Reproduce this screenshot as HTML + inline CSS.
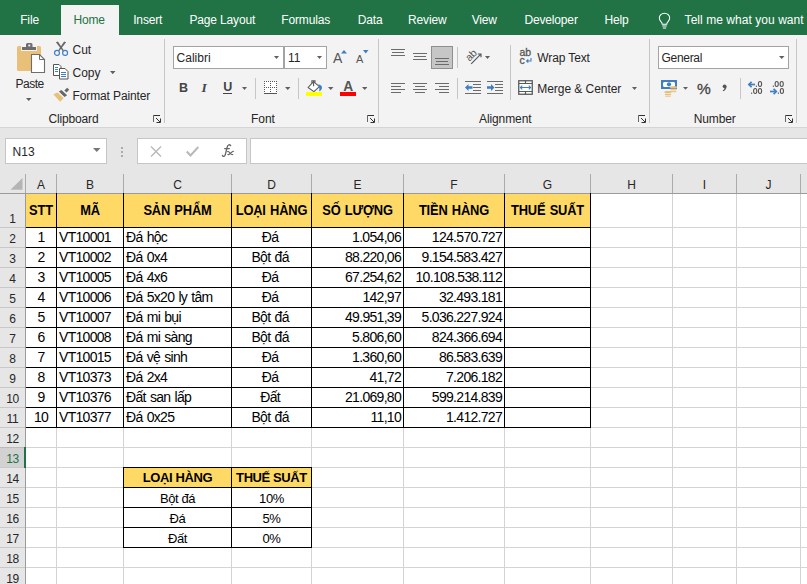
<!DOCTYPE html>
<html><head><meta charset="utf-8"><title>Excel</title><style>
html,body{margin:0;padding:0;width:807px;height:584px;overflow:hidden;background:#fff;font-family:"Liberation Sans",sans-serif;}
.a{position:absolute;}
.t{white-space:nowrap;}
</style></head><body>
<div class="a" style="left:0px;top:0px;width:807px;height:35px;background:#217346"></div>
<div class="a" style="left:61px;top:5px;width:58px;height:30px;background:#f3f3f3"></div>
<div class="a t" style="left:20.2px;top:14.14px;font-size:12px;line-height:12px;color:#ffffff;font-weight:400;letter-spacing:-0.15px;">File</div>
<div class="a t" style="left:73.4px;top:14.14px;font-size:12px;line-height:12px;color:#217346;font-weight:400;letter-spacing:-0.15px;">Home</div>
<div class="a t" style="left:133.2px;top:14.14px;font-size:12px;line-height:12px;color:#ffffff;font-weight:400;letter-spacing:-0.15px;">Insert</div>
<div class="a t" style="left:189.4px;top:14.14px;font-size:12px;line-height:12px;color:#ffffff;font-weight:400;letter-spacing:-0.15px;">Page Layout</div>
<div class="a t" style="left:281.3px;top:14.14px;font-size:12px;line-height:12px;color:#ffffff;font-weight:400;letter-spacing:-0.15px;">Formulas</div>
<div class="a t" style="left:357.7px;top:14.14px;font-size:12px;line-height:12px;color:#ffffff;font-weight:400;letter-spacing:-0.15px;">Data</div>
<div class="a t" style="left:408px;top:14.14px;font-size:12px;line-height:12px;color:#ffffff;font-weight:400;letter-spacing:-0.15px;">Review</div>
<div class="a t" style="left:471.7px;top:14.14px;font-size:12px;line-height:12px;color:#ffffff;font-weight:400;letter-spacing:-0.15px;">View</div>
<div class="a t" style="left:524.4px;top:14.14px;font-size:12px;line-height:12px;color:#ffffff;font-weight:400;letter-spacing:-0.15px;">Developer</div>
<div class="a t" style="left:604.5px;top:14.14px;font-size:12px;line-height:12px;color:#ffffff;font-weight:400;letter-spacing:-0.15px;">Help</div>
<div class="a t" style="left:684.6px;top:14.14px;font-size:12px;line-height:12px;color:#ffffff;font-weight:400;letter-spacing:0.05px;">Tell me what you want to do</div>
<svg class="a" style="left:657.5px;top:12px" width="13" height="17" viewBox="0 0 16 20.5"><path d="M8 1.2 C4.4 1.2 1.6 3.9 1.6 7.2 C1.6 9.5 2.9 10.8 3.9 12 C4.6 12.8 5.2 13.5 5.2 14.8 L10.8 14.8 C10.8 13.5 11.4 12.8 12.1 12 C13.1 10.8 14.4 9.5 14.4 7.2 C14.4 3.9 11.6 1.2 8 1.2 Z" fill="none" stroke="#fff" stroke-width="1.25"/><line x1="5.2" y1="17" x2="10.8" y2="17" stroke="#fff" stroke-width="1.25"/><line x1="6" y1="19.5" x2="10" y2="19.5" stroke="#fff" stroke-width="1.25"/></svg>
<div class="a" style="left:0px;top:35px;width:807px;height:92px;background:#f3f3f3"></div>
<div class="a" style="left:0px;top:127px;width:807px;height:1px;background:#d5d5d5"></div>
<div class="a" style="left:164px;top:39px;width:1px;height:84px;background:#c6c6c6"></div>
<div class="a" style="left:378px;top:39px;width:1px;height:84px;background:#c6c6c6"></div>
<div class="a" style="left:649px;top:39px;width:1px;height:84px;background:#c6c6c6"></div>
<div class="a" style="left:796px;top:39px;width:1px;height:84px;background:#c6c6c6"></div>
<svg class="a" style="left:15px;top:42px" width="32" height="32" viewBox="0 0 32 32"><rect x="2" y="4" width="24" height="25" rx="1.5" fill="#e8c07a"/><path d="M6 9 V4 H10 V2 Q10 0 12 0 H16.5 Q18.5 0 18.5 2 V4 H22 V9 Z" fill="#f3f3f3"/><path d="M7 8 V5 H11 V2.5 Q11 1 12.5 1 H16 Q17.5 1 17.5 2.5 V5 H21 V8 Z" fill="#6d6d6d"/><rect x="13.3" y="2.6" width="2" height="1.8" fill="#f3f3f3"/><path d="M16.5 12.5 H24.5 L29.5 17.5 V30.5 H16.5 Z" fill="#fff" stroke="#6d6d6d" stroke-width="1.1"/><path d="M24.5 12.5 V17.5 H29.5" fill="none" stroke="#6d6d6d" stroke-width="1"/></svg>
<div class="a t" style="left:15.6px;top:77.84px;font-size:12px;line-height:12px;color:#262626;font-weight:400;letter-spacing:-0.5px;">Paste</div>
<svg class="a" style="left:26px;top:98px" width="5.5" height="3" viewBox="0 0 5.5 3"><polygon points="0,0 5.5,0 2.75,3" fill="#5f5f5f"/></svg>
<svg class="a" style="left:53px;top:41px" width="16" height="16" viewBox="0 0 16 16"><path d="M2.9 1.3 L4.9 0.5 L10.9 9.6 L9.9 10.2 Z" fill="#666"/><path d="M13.1 1.3 L11.1 0.5 L5.1 9.6 L6.1 10.2 Z" fill="#666"/><circle cx="4" cy="11.9" r="2.45" fill="none" stroke="#3f7fc1" stroke-width="1.2"/><circle cx="12.1" cy="11.9" r="2.45" fill="none" stroke="#3f7fc1" stroke-width="1.2"/></svg>
<div class="a t" style="left:72.5px;top:43.84px;font-size:12px;line-height:12px;color:#262626;font-weight:400;letter-spacing:0px;">Cut</div>
<svg class="a" style="left:53px;top:64px" width="16" height="16" viewBox="0 0 16 16"><path d="M0.5 0.5 H6 L8 2.5 V11.5 H0.5 Z" fill="#fff" stroke="#555" stroke-width="1"/><path d="M6.5 4.5 H12 L15 7.5 V15 H6.5 Z" fill="#fff" stroke="#555" stroke-width="1"/><path d="M2 3.5 H5 M2 5.5 H5 M2 7.5 H5 M8 8.5 H13 M8 10.5 H13 M8 12.5 H13" stroke="#3f7fc1" stroke-width="1"/></svg>
<div class="a t" style="left:72.5px;top:66.84px;font-size:12px;line-height:12px;color:#262626;font-weight:400;letter-spacing:0px;">Copy</div>
<svg class="a" style="left:110px;top:71px" width="5.5" height="3.200000000000003" viewBox="0 0 5.5 3.200000000000003"><polygon points="0,0 5.5,0 2.75,3.200000000000003" fill="#5f5f5f"/></svg>
<svg class="a" style="left:53px;top:87px" width="17" height="16" viewBox="0 0 17 16"><path d="M0.3 7.3 L4.6 5.6 L10.7 11.2 L7.1 14.8 Z" fill="#e8c07a"/><path d="M5.9 4.6 L8.4 3 L14.1 8.3 L11.5 10 Z" fill="#666"/><path d="M11.4 3.4 L14.1 0.8 L16.2 2.7 L13.5 5.5 Z" fill="#666"/></svg>
<div class="a t" style="left:72.5px;top:89.84px;font-size:12px;line-height:12px;color:#262626;font-weight:400;letter-spacing:-0.12px;">Format Painter</div>
<div class="a t" style="left:48.4px;top:112.84px;font-size:12px;line-height:12px;color:#262626;font-weight:400;letter-spacing:-0.15px;">Clipboard</div>
<svg class="a" style="left:153px;top:115px" width="9" height="9" viewBox="0 0 9 9"><path d="M0.5 7 V0.5" fill="none" stroke="#666" stroke-width="1"/><path d="M0.5 0.5 H7" fill="none" stroke="#333" stroke-width="1"/><path d="M3 3 L7 7" fill="none" stroke="#333" stroke-width="1"/><path d="M3.5 7.5 H7.5 V3.5" fill="none" stroke="#333" stroke-width="1"/></svg>
<div class="a" style="left:173px;top:46px;width:111px;height:23px;background:#fff;border:1px solid #a3a3a3;box-sizing:border-box"></div>
<div class="a" style="left:284px;top:46px;width:43px;height:23px;background:#fff;border:1px solid #a3a3a3;box-sizing:border-box"></div>
<div class="a t" style="left:176.6px;top:51.84px;font-size:12px;line-height:12px;color:#262626;font-weight:400;letter-spacing:0px;">Calibri</div>
<svg class="a" style="left:274px;top:56px" width="5" height="3" viewBox="0 0 5 3"><polygon points="0,0 5,0 2.5,3" fill="#5f5f5f"/></svg>
<div class="a t" style="left:288px;top:51.84px;font-size:12px;line-height:12px;color:#262626;font-weight:400;letter-spacing:0px;">11</div>
<svg class="a" style="left:317px;top:56px" width="5" height="3" viewBox="0 0 5 3"><polygon points="0,0 5,0 2.5,3" fill="#5f5f5f"/></svg>
<div class="a t" style="left:333px;top:51.15px;font-size:14px;line-height:14px;color:#555;font-weight:400;letter-spacing:0px;">A</div>
<svg class="a" style="left:341px;top:50px" width="6" height="3.5" viewBox="0 0 6 3.5"><polygon points="0,3.5 6,3.5 3,0" fill="#3f7fc1"/></svg>
<div class="a t" style="left:356px;top:53.69px;font-size:11px;line-height:11px;color:#555;font-weight:400;letter-spacing:0px;">A</div>
<svg class="a" style="left:363px;top:50px" width="5.5" height="3.5" viewBox="0 0 5.5 3.5"><polygon points="0,0 5.5,0 2.75,3.5" fill="#3f7fc1"/></svg>
<div class="a t" style="left:179px;top:82.02px;font-size:12.5px;line-height:12.5px;color:#444;font-weight:700;letter-spacing:0px;">B</div>
<div class="a t" style="left:201.5px;top:81.17px;font-size:13.5px;line-height:13.5px;color:#444;font-weight:700;letter-spacing:0px;font-style:italic;font-family:'Liberation Serif',serif">I</div>
<div class="a t" style="left:223.3px;top:81.42px;font-size:12.5px;line-height:12.5px;color:#444;font-weight:700;letter-spacing:0px;">U</div>
<div class="a" style="left:223px;top:93px;width:9px;height:1px;background:#444"></div>
<svg class="a" style="left:242px;top:87px" width="5" height="3" viewBox="0 0 5 3"><polygon points="0,0 5,0 2.5,3" fill="#5f5f5f"/></svg>
<div class="a" style="left:255px;top:78px;width:1px;height:21px;background:#c6c6c6"></div>
<div class="a" style="left:264px;top:81px;width:13px;height:13px;background:#fff"></div>
<div class="a" style="left:264px;top:81px;width:1px;height:1px;background:#555"></div>
<div class="a" style="left:264px;top:87px;width:1px;height:1px;background:#555"></div>
<div class="a" style="left:266px;top:81px;width:1px;height:1px;background:#555"></div>
<div class="a" style="left:266px;top:87px;width:1px;height:1px;background:#555"></div>
<div class="a" style="left:268px;top:81px;width:1px;height:1px;background:#555"></div>
<div class="a" style="left:268px;top:87px;width:1px;height:1px;background:#555"></div>
<div class="a" style="left:270px;top:81px;width:1px;height:1px;background:#555"></div>
<div class="a" style="left:270px;top:87px;width:1px;height:1px;background:#555"></div>
<div class="a" style="left:272px;top:81px;width:1px;height:1px;background:#555"></div>
<div class="a" style="left:272px;top:87px;width:1px;height:1px;background:#555"></div>
<div class="a" style="left:274px;top:81px;width:1px;height:1px;background:#555"></div>
<div class="a" style="left:274px;top:87px;width:1px;height:1px;background:#555"></div>
<div class="a" style="left:276px;top:81px;width:1px;height:1px;background:#555"></div>
<div class="a" style="left:276px;top:87px;width:1px;height:1px;background:#555"></div>
<div class="a" style="left:264px;top:83px;width:1px;height:1px;background:#555"></div>
<div class="a" style="left:264px;top:85px;width:1px;height:1px;background:#555"></div>
<div class="a" style="left:264px;top:89px;width:1px;height:1px;background:#555"></div>
<div class="a" style="left:264px;top:91px;width:1px;height:1px;background:#555"></div>
<div class="a" style="left:270px;top:83px;width:1px;height:1px;background:#555"></div>
<div class="a" style="left:270px;top:85px;width:1px;height:1px;background:#555"></div>
<div class="a" style="left:270px;top:89px;width:1px;height:1px;background:#555"></div>
<div class="a" style="left:270px;top:91px;width:1px;height:1px;background:#555"></div>
<div class="a" style="left:276px;top:83px;width:1px;height:1px;background:#555"></div>
<div class="a" style="left:276px;top:85px;width:1px;height:1px;background:#555"></div>
<div class="a" style="left:276px;top:89px;width:1px;height:1px;background:#555"></div>
<div class="a" style="left:276px;top:91px;width:1px;height:1px;background:#555"></div>
<div class="a" style="left:264px;top:93px;width:13px;height:1px;background:#555"></div>
<svg class="a" style="left:285px;top:87px" width="5.5" height="3" viewBox="0 0 5.5 3"><polygon points="0,0 5.5,0 2.75,3" fill="#5f5f5f"/></svg>
<div class="a" style="left:298px;top:78px;width:1px;height:21px;background:#c6c6c6"></div>
<svg class="a" style="left:306px;top:79px" width="17" height="17" viewBox="0 0 17 17"><path d="M2.1 8.5 L7.5 2.6 L13.4 7.6 L7.9 12.6 Z" fill="#fff" stroke="#5a5a5a" stroke-width="1.1" stroke-linejoin="round"/><path d="M5.9 4.3 V1.8 H9 V3.6 M7.6 1.8 V7.2" fill="none" stroke="#5a5a5a" stroke-width="1.1"/><path d="M12.4 5.2 Q16.6 6.3 15.9 9.4 Q15.4 11.4 13.2 12.6 Q13.9 9.2 12.6 7.8 Z" fill="#3f7fc1"/><rect x="0" y="13" width="16" height="4" fill="#ffff00"/></svg>
<svg class="a" style="left:328px;top:87px" width="5.5" height="3" viewBox="0 0 5.5 3"><polygon points="0,0 5.5,0 2.75,3" fill="#5f5f5f"/></svg>
<div class="a" style="left:340px;top:92px;width:16px;height:4px;background:#ff0000"></div>
<div class="a t" style="left:343.2px;top:80.12px;font-size:13.8px;line-height:13.8px;color:#555;font-weight:700;letter-spacing:0px;">A</div>
<svg class="a" style="left:361.5px;top:87px" width="5.5" height="3" viewBox="0 0 5.5 3"><polygon points="0,0 5.5,0 2.75,3" fill="#5f5f5f"/></svg>
<div class="a t" style="left:250.9px;top:112.84px;font-size:12px;line-height:12px;color:#262626;font-weight:400;letter-spacing:0px;">Font</div>
<svg class="a" style="left:367px;top:115px" width="9" height="9" viewBox="0 0 9 9"><path d="M0.5 7 V0.5" fill="none" stroke="#666" stroke-width="1"/><path d="M0.5 0.5 H7" fill="none" stroke="#333" stroke-width="1"/><path d="M3 3 L7 7" fill="none" stroke="#333" stroke-width="1"/><path d="M3.5 7.5 H7.5 V3.5" fill="none" stroke="#333" stroke-width="1"/></svg>
<div class="a" style="left:391px;top:49px;width:14px;height:1px;background:#6b6b6b"></div>
<div class="a" style="left:392px;top:52px;width:12px;height:1px;background:#6b6b6b"></div>
<div class="a" style="left:391px;top:55px;width:14px;height:1px;background:#6b6b6b"></div>
<div class="a" style="left:413px;top:53px;width:14px;height:1px;background:#6b6b6b"></div>
<div class="a" style="left:414px;top:56px;width:12px;height:1px;background:#6b6b6b"></div>
<div class="a" style="left:413px;top:59px;width:14px;height:1px;background:#6b6b6b"></div>
<div class="a" style="left:431px;top:46px;width:22px;height:23px;background:#c6c6c6;border:1px solid #8f8f8f;box-sizing:border-box"></div>
<div class="a" style="left:435px;top:58px;width:14px;height:1px;background:#6b6b6b"></div>
<div class="a" style="left:436px;top:61px;width:12px;height:1px;background:#6b6b6b"></div>
<div class="a" style="left:435px;top:64px;width:14px;height:1px;background:#6b6b6b"></div>
<div class="a" style="left:457px;top:47px;width:1px;height:21px;background:#c6c6c6"></div>
<div class="a t" style="left:468.6px;top:52.5px;font-size:10.5px;line-height:10px;color:#555;transform-origin:0 8.465px;transform:rotate(-45deg)">ab</div>
<svg class="a" style="left:464px;top:49px" width="20" height="16" viewBox="0 0 20 16"><path d="M7.2 14.8 L16.8 5.2 M13.8 5 H17 V8.2" fill="none" stroke="#555" stroke-width="1.15"/></svg>
<svg class="a" style="left:485px;top:56px" width="5" height="3" viewBox="0 0 5 3"><polygon points="0,0 5,0 2.5,3" fill="#5f5f5f"/></svg>
<div class="a" style="left:391px;top:83px;width:14px;height:1px;background:#6b6b6b"></div>
<div class="a" style="left:391px;top:86px;width:10px;height:1px;background:#6b6b6b"></div>
<div class="a" style="left:391px;top:89px;width:14px;height:1px;background:#6b6b6b"></div>
<div class="a" style="left:391px;top:92px;width:10px;height:1px;background:#6b6b6b"></div>
<div class="a" style="left:413px;top:83px;width:14px;height:1px;background:#6b6b6b"></div>
<div class="a" style="left:415px;top:86px;width:10px;height:1px;background:#6b6b6b"></div>
<div class="a" style="left:413px;top:89px;width:14px;height:1px;background:#6b6b6b"></div>
<div class="a" style="left:415px;top:92px;width:10px;height:1px;background:#6b6b6b"></div>
<div class="a" style="left:435px;top:83px;width:14px;height:1px;background:#6b6b6b"></div>
<div class="a" style="left:439px;top:86px;width:10px;height:1px;background:#6b6b6b"></div>
<div class="a" style="left:435px;top:89px;width:14px;height:1px;background:#6b6b6b"></div>
<div class="a" style="left:439px;top:92px;width:10px;height:1px;background:#6b6b6b"></div>
<div class="a" style="left:457px;top:78px;width:1px;height:21px;background:#c6c6c6"></div>
<div class="a" style="left:465px;top:81px;width:16px;height:1px;background:#6b6b6b"></div>
<div class="a" style="left:473px;top:84px;width:8px;height:1px;background:#6b6b6b"></div>
<div class="a" style="left:473px;top:87px;width:8px;height:1px;background:#6b6b6b"></div>
<div class="a" style="left:473px;top:90px;width:8px;height:1px;background:#6b6b6b"></div>
<div class="a" style="left:465px;top:93px;width:16px;height:1px;background:#6b6b6b"></div>
<svg class="a" style="left:465px;top:84px" width="8" height="7" viewBox="0 0 8 7"><path d="M0 3.5 L3.5 0 V2.3 H7.5 V4.7 H3.5 V7 Z" fill="#3f7fc1"/></svg>
<div class="a" style="left:487px;top:81px;width:16px;height:1px;background:#6b6b6b"></div>
<div class="a" style="left:495px;top:84px;width:8px;height:1px;background:#6b6b6b"></div>
<div class="a" style="left:495px;top:87px;width:8px;height:1px;background:#6b6b6b"></div>
<div class="a" style="left:495px;top:90px;width:8px;height:1px;background:#6b6b6b"></div>
<div class="a" style="left:487px;top:93px;width:16px;height:1px;background:#6b6b6b"></div>
<svg class="a" style="left:487px;top:84px" width="8" height="7" viewBox="0 0 8 7"><path d="M7.5 3.5 L4 0 V2.3 H0 V4.7 H4 V7 Z" fill="#3f7fc1"/></svg>
<div class="a" style="left:510px;top:45px;width:1px;height:55px;background:#c6c6c6"></div>
<div class="a t" style="left:519.5px;top:46.91px;font-size:10.5px;line-height:10.5px;color:#555;font-weight:400;letter-spacing:-0.2px;-webkit-text-stroke:0.3px #555">ab</div>
<div class="a t" style="left:519.6px;top:54.51px;font-size:10.5px;line-height:10.5px;color:#555;font-weight:400;letter-spacing:0px;-webkit-text-stroke:0.3px #555">c</div>
<svg class="a" style="left:525px;top:57px" width="8" height="7" viewBox="0 0 8 7"><path d="M6 1 V4 H1.8 M3.3 2.5 L1.6 4 L3.3 5.5" fill="none" stroke="#3f7fc1" stroke-width="1.1"/></svg>
<div class="a t" style="left:537.3px;top:52.14px;font-size:12px;line-height:12px;color:#262626;font-weight:400;letter-spacing:-0.12px;">Wrap Text</div>
<svg class="a" style="left:518px;top:80px" width="15" height="15" viewBox="0 0 15 15"><rect x="0.75" y="0.75" width="13.5" height="13.5" fill="#fff" stroke="#5a5a5a" stroke-width="1.3"/><path d="M0.5 3.5 H14.5 M0.5 11.5 H14.5 M7.5 0.5 V3.5 M7.5 11.5 V14.5" stroke="#5a5a5a" stroke-width="1.2" fill="none"/><path d="M2.4 7.5 H12.6 M4.2 5.7 L2.4 7.5 L4.2 9.3 M10.8 5.7 L12.6 7.5 L10.8 9.3" stroke="#3f7fc1" stroke-width="1.1" fill="none"/></svg>
<div class="a t" style="left:537.3px;top:82.64px;font-size:12px;line-height:12px;color:#262626;font-weight:400;letter-spacing:-0.05px;">Merge &amp; Center</div>
<svg class="a" style="left:632px;top:87px" width="5" height="3" viewBox="0 0 5 3"><polygon points="0,0 5,0 2.5,3" fill="#5f5f5f"/></svg>
<div class="a t" style="left:479px;top:112.84px;font-size:12px;line-height:12px;color:#262626;font-weight:400;letter-spacing:-0.1px;">Alignment</div>
<svg class="a" style="left:638px;top:115px" width="9" height="9" viewBox="0 0 9 9"><path d="M0.5 7 V0.5" fill="none" stroke="#666" stroke-width="1"/><path d="M0.5 0.5 H7" fill="none" stroke="#333" stroke-width="1"/><path d="M3 3 L7 7" fill="none" stroke="#333" stroke-width="1"/><path d="M3.5 7.5 H7.5 V3.5" fill="none" stroke="#333" stroke-width="1"/></svg>
<div class="a" style="left:658px;top:46px;width:131px;height:23px;background:#fff;border:1px solid #a3a3a3;box-sizing:border-box"></div>
<div class="a t" style="left:661.5px;top:51.84px;font-size:12px;line-height:12px;color:#262626;font-weight:400;letter-spacing:-0.3px;">General</div>
<svg class="a" style="left:779px;top:56.3px" width="5.5" height="3.0" viewBox="0 0 5.5 3.0"><polygon points="0,0 5.5,0 2.75,3.0" fill="#5f5f5f"/></svg>
<svg class="a" style="left:660px;top:79px" width="18" height="18" viewBox="0 0 18 18"><rect x="1" y="1" width="16" height="9" fill="#3f7fc1"/><path d="M3.5 3 H14.5 V4 H15 V7 H14.5 V8 H3.5 V7 H3 V4 H3.5 Z" fill="#fff"/><circle cx="9" cy="5.3" r="2.1" fill="#3f7fc1"/><g fill="#e8c07a"><rect x="10" y="7.3" width="7" height="2.2" rx="1.1"/><rect x="10.3" y="10.2" width="6.4" height="1.1"/><rect x="10.8" y="12.1" width="5.4" height="1.1"/><rect x="4.5" y="12" width="7" height="2.2" rx="1.1"/><rect x="4.8" y="14.9" width="6.4" height="1.1"/><rect x="5.3" y="16.6" width="5.4" height="1.1"/></g></svg>
<svg class="a" style="left:683px;top:87px" width="5" height="2.700000000000003" viewBox="0 0 5 2.700000000000003"><polygon points="0,0 5,0 2.5,2.700000000000003" fill="#5f5f5f"/></svg>
<div class="a t" style="left:697px;top:80.58px;font-size:15.5px;line-height:15.5px;color:#444;font-weight:400;letter-spacing:0px;-webkit-text-stroke:0.3px #444">%</div>
<svg class="a" style="left:721px;top:83px" width="7" height="10" viewBox="0 0 7 10"><circle cx="3.6" cy="3.3" r="1.9" fill="#555"/><path d="M5.5 3.4 Q5.5 6.6 2.2 8.3 L1.7 7.6 Q3.7 6.1 3.7 4.4 Z" fill="#555"/></svg>
<div class="a" style="left:740px;top:78px;width:1px;height:21px;background:#c6c6c6"></div>
<svg class="a" style="left:744px;top:78px" width="44" height="18" viewBox="0 0 44 18"><g fill="none" stroke="#3f7fc1" stroke-width="1.7"><path d="M4.8 6.5 H11"/><path d="M7.6 3.8 L4.9 6.5 L7.6 9.2"/><path d="M26 13.5 H32.3"/><path d="M29.6 10.8 L32.3 13.5 L29.6 16.2"/></g><g fill="none" stroke="#555" stroke-width="1.1"><ellipse cx="16" cy="6" rx="1.6" ry="2.45"/><ellipse cx="11.2" cy="13" rx="1.6" ry="2.45"/><ellipse cx="16" cy="13" rx="1.6" ry="2.45"/><ellipse cx="32.7" cy="6" rx="1.6" ry="2.45"/><ellipse cx="37.7" cy="6" rx="1.6" ry="2.45"/><ellipse cx="37.9" cy="13" rx="1.6" ry="2.45"/></g><g fill="#555"><rect x="11.8" y="7.6" width="1.2" height="1.2"/><rect x="7" y="14.6" width="1.2" height="1.2"/><rect x="28.8" y="7.6" width="1.2" height="1.2"/><rect x="33.8" y="14.6" width="1.2" height="1.2"/></g></svg>
<div class="a t" style="left:693.7px;top:112.84px;font-size:12px;line-height:12px;color:#262626;font-weight:400;letter-spacing:-0.1px;">Number</div>
<svg class="a" style="left:785px;top:115px" width="9" height="9" viewBox="0 0 9 9"><path d="M0.5 7 V0.5" fill="none" stroke="#666" stroke-width="1"/><path d="M0.5 0.5 H7" fill="none" stroke="#333" stroke-width="1"/><path d="M3 3 L7 7" fill="none" stroke="#333" stroke-width="1"/><path d="M3.5 7.5 H7.5 V3.5" fill="none" stroke="#333" stroke-width="1"/></svg>
<div class="a" style="left:0px;top:128px;width:807px;height:46px;background:#e6e6e6"></div>
<div class="a" style="left:5px;top:138px;width:102px;height:26px;background:#fff;border:1px solid #c6c6c6;box-sizing:border-box"></div>
<div class="a t" style="left:12.6px;top:145.84px;font-size:12px;line-height:12px;color:#262626;font-weight:400;letter-spacing:0px;">N13</div>
<svg class="a" style="left:93px;top:148px" width="7.5" height="4" viewBox="0 0 7.5 4"><polygon points="0,0 7.5,0 3.75,4" fill="#777"/></svg>
<div class="a" style="left:121px;top:147px;width:2px;height:2px;background:#aaa"></div>
<div class="a" style="left:121px;top:151px;width:2px;height:2px;background:#aaa"></div>
<div class="a" style="left:121px;top:155px;width:2px;height:2px;background:#aaa"></div>
<div class="a" style="left:137px;top:138px;width:110px;height:26px;background:#fff;border:1px solid #c6c6c6;box-sizing:border-box"></div>
<svg class="a" style="left:150px;top:146px" width="12" height="11" viewBox="0 0 12 11"><path d="M1 0.5 L11 10.5 M11 0.5 L1 10.5" stroke="#b8b8b8" stroke-width="1.4"/></svg>
<svg class="a" style="left:186px;top:146px" width="13" height="11" viewBox="0 0 13 11"><path d="M0.8 5.5 L4.5 9.5 L12.3 1" fill="none" stroke="#b8b8b8" stroke-width="2"/></svg>
<svg class="a" style="left:220px;top:143px" width="16" height="16" viewBox="0 0 16 16"><g fill="none" stroke="#666" stroke-linecap="round"><path d="M10.6 2.6 Q10 1.6 8.9 1.8 Q7.6 2.1 7.1 4.3 L5.3 11.6 Q4.8 13.6 3.3 13.3 Q2.5 13.1 2.4 12.4" stroke-width="1.35"/><path d="M4.6 5.6 H9.4" stroke-width="1.1"/><path d="M7.6 8.6 Q8.6 8.2 9.2 9.2 L10.9 11 Q11.5 11.8 12.8 11.5 M13.6 8.3 Q12.6 8.3 12 9 L9.6 11 Q8.8 11.8 7.8 11.5" stroke-width="1.1"/></g></svg>
<div class="a" style="left:250px;top:138px;width:557px;height:26px;background:#fff;border:1px solid #c6c6c6;border-right:none;box-sizing:border-box"></div>
<div class="a" style="left:0px;top:174px;width:807px;height:19px;background:#e6e6e6"></div>
<div class="a" style="left:0px;top:193px;width:807px;height:1px;background:#9b9b9b"></div>
<div class="a t" style="left:26px;width:30px;text-align:center;top:178.64px;font-size:12px;line-height:12px;color:#262626;font-weight:400;letter-spacing:0px;">A</div>
<div class="a t" style="left:57px;width:66px;text-align:center;top:178.64px;font-size:12px;line-height:12px;color:#262626;font-weight:400;letter-spacing:0px;">B</div>
<div class="a t" style="left:124px;width:107px;text-align:center;top:178.64px;font-size:12px;line-height:12px;color:#262626;font-weight:400;letter-spacing:0px;">C</div>
<div class="a t" style="left:232px;width:79px;text-align:center;top:178.64px;font-size:12px;line-height:12px;color:#262626;font-weight:400;letter-spacing:0px;">D</div>
<div class="a t" style="left:312px;width:91px;text-align:center;top:178.64px;font-size:12px;line-height:12px;color:#262626;font-weight:400;letter-spacing:0px;">E</div>
<div class="a t" style="left:404px;width:100px;text-align:center;top:178.64px;font-size:12px;line-height:12px;color:#262626;font-weight:400;letter-spacing:0px;">F</div>
<div class="a t" style="left:505px;width:85px;text-align:center;top:178.64px;font-size:12px;line-height:12px;color:#262626;font-weight:400;letter-spacing:0px;">G</div>
<div class="a t" style="left:591px;width:81px;text-align:center;top:178.64px;font-size:12px;line-height:12px;color:#262626;font-weight:400;letter-spacing:0px;">H</div>
<div class="a t" style="left:673px;width:63px;text-align:center;top:178.64px;font-size:12px;line-height:12px;color:#262626;font-weight:400;letter-spacing:0px;">I</div>
<div class="a t" style="left:737px;width:63px;text-align:center;top:178.64px;font-size:12px;line-height:12px;color:#262626;font-weight:400;letter-spacing:0px;">J</div>
<div class="a" style="left:25px;top:174px;width:1px;height:19px;background:#ababab"></div>
<div class="a" style="left:56px;top:174px;width:1px;height:19px;background:#ababab"></div>
<div class="a" style="left:123px;top:174px;width:1px;height:19px;background:#ababab"></div>
<div class="a" style="left:231px;top:174px;width:1px;height:19px;background:#ababab"></div>
<div class="a" style="left:311px;top:174px;width:1px;height:19px;background:#ababab"></div>
<div class="a" style="left:403px;top:174px;width:1px;height:19px;background:#ababab"></div>
<div class="a" style="left:504px;top:174px;width:1px;height:19px;background:#ababab"></div>
<div class="a" style="left:590px;top:174px;width:1px;height:19px;background:#ababab"></div>
<div class="a" style="left:672px;top:174px;width:1px;height:19px;background:#ababab"></div>
<div class="a" style="left:736px;top:174px;width:1px;height:19px;background:#ababab"></div>
<div class="a" style="left:800px;top:174px;width:1px;height:19px;background:#ababab"></div>
<div class="a" style="left:0px;top:194px;width:25px;height:390px;background:#e6e6e6"></div>
<div class="a" style="left:25px;top:194px;width:1px;height:390px;background:#9b9b9b"></div>
<svg class="a" style="left:10px;top:178px" width="13" height="12" viewBox="0 0 13 12"><polygon points="12.5,0 12.5,11.7 0.5,11.7" fill="#b4b4b4"/></svg>
<div class="a" style="left:56px;top:194px;width:1px;height:390px;background:#d4d4d4"></div>
<div class="a" style="left:123px;top:194px;width:1px;height:390px;background:#d4d4d4"></div>
<div class="a" style="left:231px;top:194px;width:1px;height:390px;background:#d4d4d4"></div>
<div class="a" style="left:311px;top:194px;width:1px;height:390px;background:#d4d4d4"></div>
<div class="a" style="left:403px;top:194px;width:1px;height:390px;background:#d4d4d4"></div>
<div class="a" style="left:504px;top:194px;width:1px;height:390px;background:#d4d4d4"></div>
<div class="a" style="left:590px;top:194px;width:1px;height:390px;background:#d4d4d4"></div>
<div class="a" style="left:672px;top:194px;width:1px;height:390px;background:#d4d4d4"></div>
<div class="a" style="left:736px;top:194px;width:1px;height:390px;background:#d4d4d4"></div>
<div class="a" style="left:800px;top:194px;width:1px;height:390px;background:#d4d4d4"></div>
<div class="a" style="left:26px;top:227px;width:781px;height:1px;background:#d4d4d4"></div>
<div class="a" style="left:0px;top:227px;width:25px;height:1px;background:#c8c8c8"></div>
<div class="a" style="left:26px;top:247px;width:781px;height:1px;background:#d4d4d4"></div>
<div class="a" style="left:0px;top:247px;width:25px;height:1px;background:#c8c8c8"></div>
<div class="a" style="left:26px;top:267px;width:781px;height:1px;background:#d4d4d4"></div>
<div class="a" style="left:0px;top:267px;width:25px;height:1px;background:#c8c8c8"></div>
<div class="a" style="left:26px;top:287px;width:781px;height:1px;background:#d4d4d4"></div>
<div class="a" style="left:0px;top:287px;width:25px;height:1px;background:#c8c8c8"></div>
<div class="a" style="left:26px;top:307px;width:781px;height:1px;background:#d4d4d4"></div>
<div class="a" style="left:0px;top:307px;width:25px;height:1px;background:#c8c8c8"></div>
<div class="a" style="left:26px;top:327px;width:781px;height:1px;background:#d4d4d4"></div>
<div class="a" style="left:0px;top:327px;width:25px;height:1px;background:#c8c8c8"></div>
<div class="a" style="left:26px;top:347px;width:781px;height:1px;background:#d4d4d4"></div>
<div class="a" style="left:0px;top:347px;width:25px;height:1px;background:#c8c8c8"></div>
<div class="a" style="left:26px;top:367px;width:781px;height:1px;background:#d4d4d4"></div>
<div class="a" style="left:0px;top:367px;width:25px;height:1px;background:#c8c8c8"></div>
<div class="a" style="left:26px;top:387px;width:781px;height:1px;background:#d4d4d4"></div>
<div class="a" style="left:0px;top:387px;width:25px;height:1px;background:#c8c8c8"></div>
<div class="a" style="left:26px;top:407px;width:781px;height:1px;background:#d4d4d4"></div>
<div class="a" style="left:0px;top:407px;width:25px;height:1px;background:#c8c8c8"></div>
<div class="a" style="left:26px;top:427px;width:781px;height:1px;background:#d4d4d4"></div>
<div class="a" style="left:0px;top:427px;width:25px;height:1px;background:#c8c8c8"></div>
<div class="a" style="left:26px;top:447px;width:781px;height:1px;background:#d4d4d4"></div>
<div class="a" style="left:0px;top:447px;width:25px;height:1px;background:#c8c8c8"></div>
<div class="a" style="left:26px;top:467px;width:781px;height:1px;background:#d4d4d4"></div>
<div class="a" style="left:0px;top:467px;width:25px;height:1px;background:#c8c8c8"></div>
<div class="a" style="left:26px;top:487px;width:781px;height:1px;background:#d4d4d4"></div>
<div class="a" style="left:0px;top:487px;width:25px;height:1px;background:#c8c8c8"></div>
<div class="a" style="left:26px;top:507px;width:781px;height:1px;background:#d4d4d4"></div>
<div class="a" style="left:0px;top:507px;width:25px;height:1px;background:#c8c8c8"></div>
<div class="a" style="left:26px;top:527px;width:781px;height:1px;background:#d4d4d4"></div>
<div class="a" style="left:0px;top:527px;width:25px;height:1px;background:#c8c8c8"></div>
<div class="a" style="left:26px;top:547px;width:781px;height:1px;background:#d4d4d4"></div>
<div class="a" style="left:0px;top:547px;width:25px;height:1px;background:#c8c8c8"></div>
<div class="a" style="left:26px;top:567px;width:781px;height:1px;background:#d4d4d4"></div>
<div class="a" style="left:0px;top:567px;width:25px;height:1px;background:#c8c8c8"></div>
<div class="a" style="left:26px;top:587px;width:781px;height:1px;background:#d4d4d4"></div>
<div class="a" style="left:0px;top:587px;width:25px;height:1px;background:#c8c8c8"></div>
<div class="a" style="left:0px;top:448px;width:24px;height:19px;background:#d2d2d2"></div>
<div class="a" style="left:0px;top:447px;width:24px;height:1px;background:#bababa"></div>
<div class="a" style="left:24px;top:447px;width:2px;height:21px;background:#217346"></div>
<div class="a t" style="left:0px;width:25px;text-align:center;top:213.24px;font-size:12px;line-height:12px;color:#262626;font-weight:400;letter-spacing:-0.3px;">1</div>
<div class="a t" style="left:0px;width:25px;text-align:center;top:233.24px;font-size:12px;line-height:12px;color:#262626;font-weight:400;letter-spacing:-0.3px;">2</div>
<div class="a t" style="left:0px;width:25px;text-align:center;top:253.24px;font-size:12px;line-height:12px;color:#262626;font-weight:400;letter-spacing:-0.3px;">3</div>
<div class="a t" style="left:0px;width:25px;text-align:center;top:273.24px;font-size:12px;line-height:12px;color:#262626;font-weight:400;letter-spacing:-0.3px;">4</div>
<div class="a t" style="left:0px;width:25px;text-align:center;top:293.24px;font-size:12px;line-height:12px;color:#262626;font-weight:400;letter-spacing:-0.3px;">5</div>
<div class="a t" style="left:0px;width:25px;text-align:center;top:313.24px;font-size:12px;line-height:12px;color:#262626;font-weight:400;letter-spacing:-0.3px;">6</div>
<div class="a t" style="left:0px;width:25px;text-align:center;top:333.24px;font-size:12px;line-height:12px;color:#262626;font-weight:400;letter-spacing:-0.3px;">7</div>
<div class="a t" style="left:0px;width:25px;text-align:center;top:353.24px;font-size:12px;line-height:12px;color:#262626;font-weight:400;letter-spacing:-0.3px;">8</div>
<div class="a t" style="left:0px;width:25px;text-align:center;top:373.24px;font-size:12px;line-height:12px;color:#262626;font-weight:400;letter-spacing:-0.3px;">9</div>
<div class="a t" style="left:0px;width:25px;text-align:center;top:393.24px;font-size:12px;line-height:12px;color:#262626;font-weight:400;letter-spacing:-0.3px;">10</div>
<div class="a t" style="left:0px;width:25px;text-align:center;top:413.24px;font-size:12px;line-height:12px;color:#262626;font-weight:400;letter-spacing:-0.3px;">11</div>
<div class="a t" style="left:0px;width:25px;text-align:center;top:433.24px;font-size:12px;line-height:12px;color:#262626;font-weight:400;letter-spacing:-0.3px;">12</div>
<div class="a t" style="left:0px;width:25px;text-align:center;top:453.24px;font-size:12px;line-height:12px;color:#217346;font-weight:400;letter-spacing:-0.3px;">13</div>
<div class="a t" style="left:0px;width:25px;text-align:center;top:473.24px;font-size:12px;line-height:12px;color:#262626;font-weight:400;letter-spacing:-0.3px;">14</div>
<div class="a t" style="left:0px;width:25px;text-align:center;top:493.24px;font-size:12px;line-height:12px;color:#262626;font-weight:400;letter-spacing:-0.3px;">15</div>
<div class="a t" style="left:0px;width:25px;text-align:center;top:513.24px;font-size:12px;line-height:12px;color:#262626;font-weight:400;letter-spacing:-0.3px;">16</div>
<div class="a t" style="left:0px;width:25px;text-align:center;top:533.24px;font-size:12px;line-height:12px;color:#262626;font-weight:400;letter-spacing:-0.3px;">17</div>
<div class="a t" style="left:0px;width:25px;text-align:center;top:553.24px;font-size:12px;line-height:12px;color:#262626;font-weight:400;letter-spacing:-0.3px;">18</div>
<div class="a t" style="left:0px;width:25px;text-align:center;top:573.24px;font-size:12px;line-height:12px;color:#262626;font-weight:400;letter-spacing:-0.3px;">19</div>
<div class="a" style="left:26px;top:194px;width:564px;height:33px;background:#ffd966"></div>
<div class="a" style="left:124px;top:468px;width:187px;height:19px;background:#ffd966"></div>
<div class="a" style="left:56px;top:193px;width:1px;height:235px;background:#000"></div>
<div class="a" style="left:123px;top:193px;width:1px;height:235px;background:#000"></div>
<div class="a" style="left:231px;top:193px;width:1px;height:235px;background:#000"></div>
<div class="a" style="left:311px;top:193px;width:1px;height:235px;background:#000"></div>
<div class="a" style="left:403px;top:193px;width:1px;height:235px;background:#000"></div>
<div class="a" style="left:504px;top:193px;width:1px;height:235px;background:#000"></div>
<div class="a" style="left:590px;top:193px;width:1px;height:235px;background:#000"></div>
<div class="a" style="left:26px;top:227px;width:564px;height:1px;background:#000"></div>
<div class="a" style="left:26px;top:247px;width:564px;height:1px;background:#000"></div>
<div class="a" style="left:26px;top:267px;width:564px;height:1px;background:#000"></div>
<div class="a" style="left:26px;top:287px;width:564px;height:1px;background:#000"></div>
<div class="a" style="left:26px;top:307px;width:564px;height:1px;background:#000"></div>
<div class="a" style="left:26px;top:327px;width:564px;height:1px;background:#000"></div>
<div class="a" style="left:26px;top:347px;width:564px;height:1px;background:#000"></div>
<div class="a" style="left:26px;top:367px;width:564px;height:1px;background:#000"></div>
<div class="a" style="left:26px;top:387px;width:564px;height:1px;background:#000"></div>
<div class="a" style="left:26px;top:407px;width:564px;height:1px;background:#000"></div>
<div class="a" style="left:26px;top:427px;width:564px;height:1px;background:#000"></div>
<div class="a" style="left:123px;top:467px;width:1px;height:81px;background:#000"></div>
<div class="a" style="left:231px;top:467px;width:1px;height:81px;background:#000"></div>
<div class="a" style="left:311px;top:467px;width:1px;height:81px;background:#000"></div>
<div class="a" style="left:123px;top:467px;width:189px;height:1px;background:#000"></div>
<div class="a" style="left:123px;top:487px;width:189px;height:1px;background:#000"></div>
<div class="a" style="left:123px;top:507px;width:189px;height:1px;background:#000"></div>
<div class="a" style="left:123px;top:527px;width:189px;height:1px;background:#000"></div>
<div class="a" style="left:123px;top:547px;width:189px;height:1px;background:#000"></div>
<div class="a t" style="left:26px;width:30px;text-align:center;top:203.15px;font-size:14px;line-height:14px;color:#000;font-weight:700;letter-spacing:-0.2px;transform:scaleX(0.92);word-spacing:1px">STT</div>
<div class="a t" style="left:57px;width:66px;text-align:center;top:203.15px;font-size:14px;line-height:14px;color:#000;font-weight:700;letter-spacing:-0.2px;transform:scaleX(0.92);word-spacing:1px">MÃ</div>
<div class="a t" style="left:124px;width:107px;text-align:center;top:203.15px;font-size:14px;line-height:14px;color:#000;font-weight:700;letter-spacing:-0.2px;transform:scaleX(0.92);word-spacing:1px">SẢN PHẨM</div>
<div class="a t" style="left:232px;width:79px;text-align:center;top:203.15px;font-size:14px;line-height:14px;color:#000;font-weight:700;letter-spacing:-0.2px;transform:scaleX(0.92);word-spacing:1px">LOẠI HÀNG</div>
<div class="a t" style="left:312px;width:91px;text-align:center;top:203.15px;font-size:14px;line-height:14px;color:#000;font-weight:700;letter-spacing:-0.2px;transform:scaleX(0.92);word-spacing:1px">SỐ LƯỢNG</div>
<div class="a t" style="left:404px;width:100px;text-align:center;top:203.15px;font-size:14px;line-height:14px;color:#000;font-weight:700;letter-spacing:-0.2px;transform:scaleX(0.92);word-spacing:1px">TIỀN HÀNG</div>
<div class="a t" style="left:505px;width:85px;text-align:center;top:203.15px;font-size:14px;line-height:14px;color:#000;font-weight:700;letter-spacing:-0.2px;transform:scaleX(0.92);word-spacing:1px">THUẾ SUẤT</div>
<div class="a t" style="left:26px;width:30px;text-align:center;top:230.15px;font-size:14px;line-height:14px;color:#000;font-weight:400;letter-spacing:-0.7px;word-spacing:1px">1</div>
<div class="a t" style="left:59px;top:230.15px;font-size:14px;line-height:14px;color:#000;font-weight:400;letter-spacing:-0.7px;word-spacing:1px">VT10001</div>
<div class="a t" style="left:126px;top:230.15px;font-size:14px;line-height:14px;color:#000;font-weight:400;letter-spacing:-0.7px;word-spacing:1px">Đá hộc</div>
<div class="a t" style="left:230.6px;width:79.00000000000003px;text-align:center;top:230.15px;font-size:14px;line-height:14px;color:#000;font-weight:400;letter-spacing:-0.7px;word-spacing:1px">Đá</div>
<div class="a t" style="right:406px;top:230.15px;font-size:14px;line-height:14px;color:#000;font-weight:400;letter-spacing:-0.7px;word-spacing:1px">1.054,06</div>
<div class="a t" style="right:305px;top:230.15px;font-size:14px;line-height:14px;color:#000;font-weight:400;letter-spacing:-0.7px;word-spacing:1px">124.570.727</div>
<div class="a t" style="left:26px;width:30px;text-align:center;top:250.15px;font-size:14px;line-height:14px;color:#000;font-weight:400;letter-spacing:-0.7px;word-spacing:1px">2</div>
<div class="a t" style="left:59px;top:250.15px;font-size:14px;line-height:14px;color:#000;font-weight:400;letter-spacing:-0.7px;word-spacing:1px">VT10002</div>
<div class="a t" style="left:126px;top:250.15px;font-size:14px;line-height:14px;color:#000;font-weight:400;letter-spacing:-0.7px;word-spacing:1px">Đá 0x4</div>
<div class="a t" style="left:230.6px;width:79.00000000000003px;text-align:center;top:250.15px;font-size:14px;line-height:14px;color:#000;font-weight:400;letter-spacing:-0.7px;word-spacing:1px">Bột đá</div>
<div class="a t" style="right:406px;top:250.15px;font-size:14px;line-height:14px;color:#000;font-weight:400;letter-spacing:-0.7px;word-spacing:1px">88.220,06</div>
<div class="a t" style="right:305px;top:250.15px;font-size:14px;line-height:14px;color:#000;font-weight:400;letter-spacing:-0.7px;word-spacing:1px">9.154.583.427</div>
<div class="a t" style="left:26px;width:30px;text-align:center;top:270.15px;font-size:14px;line-height:14px;color:#000;font-weight:400;letter-spacing:-0.7px;word-spacing:1px">3</div>
<div class="a t" style="left:59px;top:270.15px;font-size:14px;line-height:14px;color:#000;font-weight:400;letter-spacing:-0.7px;word-spacing:1px">VT10005</div>
<div class="a t" style="left:126px;top:270.15px;font-size:14px;line-height:14px;color:#000;font-weight:400;letter-spacing:-0.7px;word-spacing:1px">Đá 4x6</div>
<div class="a t" style="left:230.6px;width:79.00000000000003px;text-align:center;top:270.15px;font-size:14px;line-height:14px;color:#000;font-weight:400;letter-spacing:-0.7px;word-spacing:1px">Đá</div>
<div class="a t" style="right:406px;top:270.15px;font-size:14px;line-height:14px;color:#000;font-weight:400;letter-spacing:-0.7px;word-spacing:1px">67.254,62</div>
<div class="a t" style="right:305px;top:270.15px;font-size:14px;line-height:14px;color:#000;font-weight:400;letter-spacing:-0.7px;word-spacing:1px">10.108.538.112</div>
<div class="a t" style="left:26px;width:30px;text-align:center;top:290.15px;font-size:14px;line-height:14px;color:#000;font-weight:400;letter-spacing:-0.7px;word-spacing:1px">4</div>
<div class="a t" style="left:59px;top:290.15px;font-size:14px;line-height:14px;color:#000;font-weight:400;letter-spacing:-0.7px;word-spacing:1px">VT10006</div>
<div class="a t" style="left:126px;top:290.15px;font-size:14px;line-height:14px;color:#000;font-weight:400;letter-spacing:-0.7px;word-spacing:1px">Đá 5x20 ly tâm</div>
<div class="a t" style="left:230.6px;width:79.00000000000003px;text-align:center;top:290.15px;font-size:14px;line-height:14px;color:#000;font-weight:400;letter-spacing:-0.7px;word-spacing:1px">Đá</div>
<div class="a t" style="right:406px;top:290.15px;font-size:14px;line-height:14px;color:#000;font-weight:400;letter-spacing:-0.7px;word-spacing:1px">142,97</div>
<div class="a t" style="right:305px;top:290.15px;font-size:14px;line-height:14px;color:#000;font-weight:400;letter-spacing:-0.7px;word-spacing:1px">32.493.181</div>
<div class="a t" style="left:26px;width:30px;text-align:center;top:310.15px;font-size:14px;line-height:14px;color:#000;font-weight:400;letter-spacing:-0.7px;word-spacing:1px">5</div>
<div class="a t" style="left:59px;top:310.15px;font-size:14px;line-height:14px;color:#000;font-weight:400;letter-spacing:-0.7px;word-spacing:1px">VT10007</div>
<div class="a t" style="left:126px;top:310.15px;font-size:14px;line-height:14px;color:#000;font-weight:400;letter-spacing:-0.7px;word-spacing:1px">Đá mi bụi</div>
<div class="a t" style="left:230.6px;width:79.00000000000003px;text-align:center;top:310.15px;font-size:14px;line-height:14px;color:#000;font-weight:400;letter-spacing:-0.7px;word-spacing:1px">Bột đá</div>
<div class="a t" style="right:406px;top:310.15px;font-size:14px;line-height:14px;color:#000;font-weight:400;letter-spacing:-0.7px;word-spacing:1px">49.951,39</div>
<div class="a t" style="right:305px;top:310.15px;font-size:14px;line-height:14px;color:#000;font-weight:400;letter-spacing:-0.7px;word-spacing:1px">5.036.227.924</div>
<div class="a t" style="left:26px;width:30px;text-align:center;top:330.15px;font-size:14px;line-height:14px;color:#000;font-weight:400;letter-spacing:-0.7px;word-spacing:1px">6</div>
<div class="a t" style="left:59px;top:330.15px;font-size:14px;line-height:14px;color:#000;font-weight:400;letter-spacing:-0.7px;word-spacing:1px">VT10008</div>
<div class="a t" style="left:126px;top:330.15px;font-size:14px;line-height:14px;color:#000;font-weight:400;letter-spacing:-0.7px;word-spacing:1px">Đá mi sàng</div>
<div class="a t" style="left:230.6px;width:79.00000000000003px;text-align:center;top:330.15px;font-size:14px;line-height:14px;color:#000;font-weight:400;letter-spacing:-0.7px;word-spacing:1px">Bột đá</div>
<div class="a t" style="right:406px;top:330.15px;font-size:14px;line-height:14px;color:#000;font-weight:400;letter-spacing:-0.7px;word-spacing:1px">5.806,60</div>
<div class="a t" style="right:305px;top:330.15px;font-size:14px;line-height:14px;color:#000;font-weight:400;letter-spacing:-0.7px;word-spacing:1px">824.366.694</div>
<div class="a t" style="left:26px;width:30px;text-align:center;top:350.15px;font-size:14px;line-height:14px;color:#000;font-weight:400;letter-spacing:-0.7px;word-spacing:1px">7</div>
<div class="a t" style="left:59px;top:350.15px;font-size:14px;line-height:14px;color:#000;font-weight:400;letter-spacing:-0.7px;word-spacing:1px">VT10015</div>
<div class="a t" style="left:126px;top:350.15px;font-size:14px;line-height:14px;color:#000;font-weight:400;letter-spacing:-0.7px;word-spacing:1px">Đá vệ sinh</div>
<div class="a t" style="left:230.6px;width:79.00000000000003px;text-align:center;top:350.15px;font-size:14px;line-height:14px;color:#000;font-weight:400;letter-spacing:-0.7px;word-spacing:1px">Đá</div>
<div class="a t" style="right:406px;top:350.15px;font-size:14px;line-height:14px;color:#000;font-weight:400;letter-spacing:-0.7px;word-spacing:1px">1.360,60</div>
<div class="a t" style="right:305px;top:350.15px;font-size:14px;line-height:14px;color:#000;font-weight:400;letter-spacing:-0.7px;word-spacing:1px">86.583.639</div>
<div class="a t" style="left:26px;width:30px;text-align:center;top:370.15px;font-size:14px;line-height:14px;color:#000;font-weight:400;letter-spacing:-0.7px;word-spacing:1px">8</div>
<div class="a t" style="left:59px;top:370.15px;font-size:14px;line-height:14px;color:#000;font-weight:400;letter-spacing:-0.7px;word-spacing:1px">VT10373</div>
<div class="a t" style="left:126px;top:370.15px;font-size:14px;line-height:14px;color:#000;font-weight:400;letter-spacing:-0.7px;word-spacing:1px">Đá 2x4</div>
<div class="a t" style="left:230.6px;width:79.00000000000003px;text-align:center;top:370.15px;font-size:14px;line-height:14px;color:#000;font-weight:400;letter-spacing:-0.7px;word-spacing:1px">Đá</div>
<div class="a t" style="right:406px;top:370.15px;font-size:14px;line-height:14px;color:#000;font-weight:400;letter-spacing:-0.7px;word-spacing:1px">41,72</div>
<div class="a t" style="right:305px;top:370.15px;font-size:14px;line-height:14px;color:#000;font-weight:400;letter-spacing:-0.7px;word-spacing:1px">7.206.182</div>
<div class="a t" style="left:26px;width:30px;text-align:center;top:390.15px;font-size:14px;line-height:14px;color:#000;font-weight:400;letter-spacing:-0.7px;word-spacing:1px">9</div>
<div class="a t" style="left:59px;top:390.15px;font-size:14px;line-height:14px;color:#000;font-weight:400;letter-spacing:-0.7px;word-spacing:1px">VT10376</div>
<div class="a t" style="left:126px;top:390.15px;font-size:14px;line-height:14px;color:#000;font-weight:400;letter-spacing:-0.7px;word-spacing:1px">Đất san lấp</div>
<div class="a t" style="left:230.6px;width:79.00000000000003px;text-align:center;top:390.15px;font-size:14px;line-height:14px;color:#000;font-weight:400;letter-spacing:-0.7px;word-spacing:1px">Đất</div>
<div class="a t" style="right:406px;top:390.15px;font-size:14px;line-height:14px;color:#000;font-weight:400;letter-spacing:-0.7px;word-spacing:1px">21.069,80</div>
<div class="a t" style="right:305px;top:390.15px;font-size:14px;line-height:14px;color:#000;font-weight:400;letter-spacing:-0.7px;word-spacing:1px">599.214.839</div>
<div class="a t" style="left:26px;width:30px;text-align:center;top:410.15px;font-size:14px;line-height:14px;color:#000;font-weight:400;letter-spacing:-0.7px;word-spacing:1px">10</div>
<div class="a t" style="left:59px;top:410.15px;font-size:14px;line-height:14px;color:#000;font-weight:400;letter-spacing:-0.7px;word-spacing:1px">VT10377</div>
<div class="a t" style="left:126px;top:410.15px;font-size:14px;line-height:14px;color:#000;font-weight:400;letter-spacing:-0.7px;word-spacing:1px">Đá 0x25</div>
<div class="a t" style="left:230.6px;width:79.00000000000003px;text-align:center;top:410.15px;font-size:14px;line-height:14px;color:#000;font-weight:400;letter-spacing:-0.7px;word-spacing:1px">Bột đá</div>
<div class="a t" style="right:406px;top:410.15px;font-size:14px;line-height:14px;color:#000;font-weight:400;letter-spacing:-0.7px;word-spacing:1px">11,10</div>
<div class="a t" style="right:305px;top:410.15px;font-size:14px;line-height:14px;color:#000;font-weight:400;letter-spacing:-0.7px;word-spacing:1px">1.412.727</div>
<div class="a t" style="left:124px;width:107px;text-align:center;top:471.0px;font-size:13px;line-height:13px;color:#000;font-weight:700;letter-spacing:-0.4px;">LOẠI HÀNG</div>
<div class="a t" style="left:232px;width:79px;text-align:center;top:471.0px;font-size:13px;line-height:13px;color:#000;font-weight:700;letter-spacing:-0.4px;">THUẾ SUẤT</div>
<div class="a t" style="left:124px;width:107px;text-align:center;top:491.5px;font-size:13px;line-height:13px;color:#000;font-weight:400;letter-spacing:-0.4px;">Bột đá</div>
<div class="a t" style="left:232px;width:79px;text-align:center;top:491.5px;font-size:13px;line-height:13px;color:#000;font-weight:400;letter-spacing:-0.4px;">10%</div>
<div class="a t" style="left:124px;width:107px;text-align:center;top:511.5px;font-size:13px;line-height:13px;color:#000;font-weight:400;letter-spacing:-0.4px;">Đá</div>
<div class="a t" style="left:232px;width:79px;text-align:center;top:511.5px;font-size:13px;line-height:13px;color:#000;font-weight:400;letter-spacing:-0.4px;">5%</div>
<div class="a t" style="left:124px;width:107px;text-align:center;top:531.5px;font-size:13px;line-height:13px;color:#000;font-weight:400;letter-spacing:-0.4px;">Đất</div>
<div class="a t" style="left:232px;width:79px;text-align:center;top:531.5px;font-size:13px;line-height:13px;color:#000;font-weight:400;letter-spacing:-0.4px;">0%</div>
</body></html>
